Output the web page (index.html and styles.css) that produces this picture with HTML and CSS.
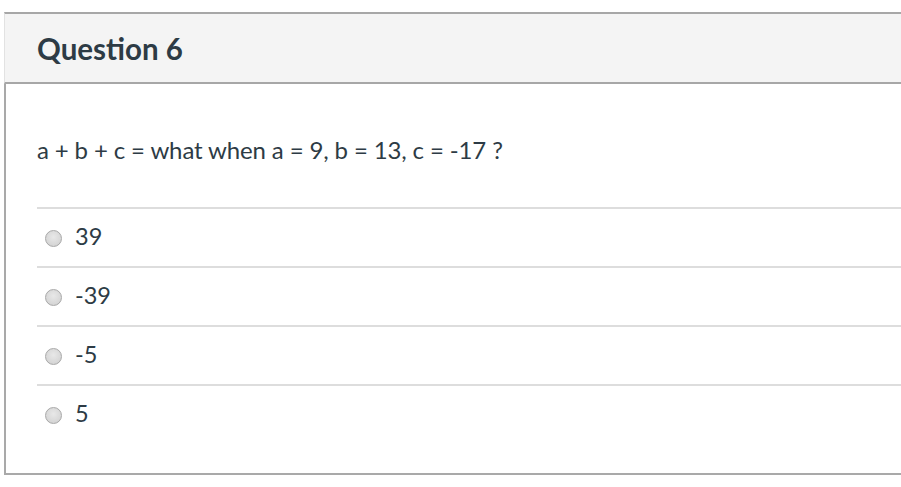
FILE: index.html
```html
<!DOCTYPE html>
<html>
<head>
<meta charset="utf-8">
<link rel="stylesheet" href="styles.css">
</head>
<body>
<div class="quiz">
  <div class="q-header">
    <h2 class="q-title">Question 6</h2>
  </div>
  <div class="q-body">
    <p class="q-text">a + b + c = what when a = 9, b = 13, c = -17 ?</p>
    <ul class="answers">
      <li class="answer"><span class="radio"></span><span class="label">39</span></li>
      <li class="answer"><span class="radio"></span><span class="label">-39</span></li>
      <li class="answer"><span class="radio"></span><span class="label">-5</span></li>
      <li class="answer"><span class="radio"></span><span class="label">5</span></li>
    </ul>
  </div>
</div>
</body>
</html>
```
FILE: styles.css
```css
html, body {
  margin: 0;
  padding: 0;
  background: #fff;
}
body {
  font-family: Lato, "Open Sans", sans-serif;
  color: #2d3b45;
  padding: 12px 0 0 4px;
}
.quiz {
  width: 897px;
}
.q-header {
  background: #f4f4f4;
  border-top: 2px solid #a7a7a7;
  border-left: 1px solid #e2e2e2;
  border-bottom: 2px solid #a7a7a7;
  height: 68px;
  display: flex;
  align-items: center;
  padding-left: 32px;
}
.q-title {
  margin: 0;
  font-size: 29.5px;
  font-weight: 700;
  letter-spacing: 0;
  color: #2d3b45;
}
.q-body {
  border-left: 2px solid #a9a9a9;
  border-bottom: 2px solid #a9a9a9;
  padding: 48px 0 29px 31px;
  height: 391px;
  box-sizing: border-box;
}
.q-text {
  margin: 0;
  font-size: 24px;
  letter-spacing: -0.13px;
  line-height: 36px;
  height: 75px;
}
.answers {
  list-style: none;
  margin: 0;
  padding: 0;
}
.answer {
  border-top: 2px solid #dddddd;
  height: 57px;
  box-sizing: border-box;
  height: 59px;
  padding: 0 0 3px 8px;
  display: flex;
  align-items: center;
}
.radio {
  width: 17px;
  height: 17px;
  border-radius: 50%;
  border: 1px solid #a8a8a8;
  background: radial-gradient(circle at 50% 40%, #e8e8e8 0%, #d6d6d6 70%, #cacaca 100%);
  box-sizing: border-box;
  margin: 4px 13px 0 0;
}
.label {
  font-size: 23.5px;
  color: #2d3b45;
}
```
